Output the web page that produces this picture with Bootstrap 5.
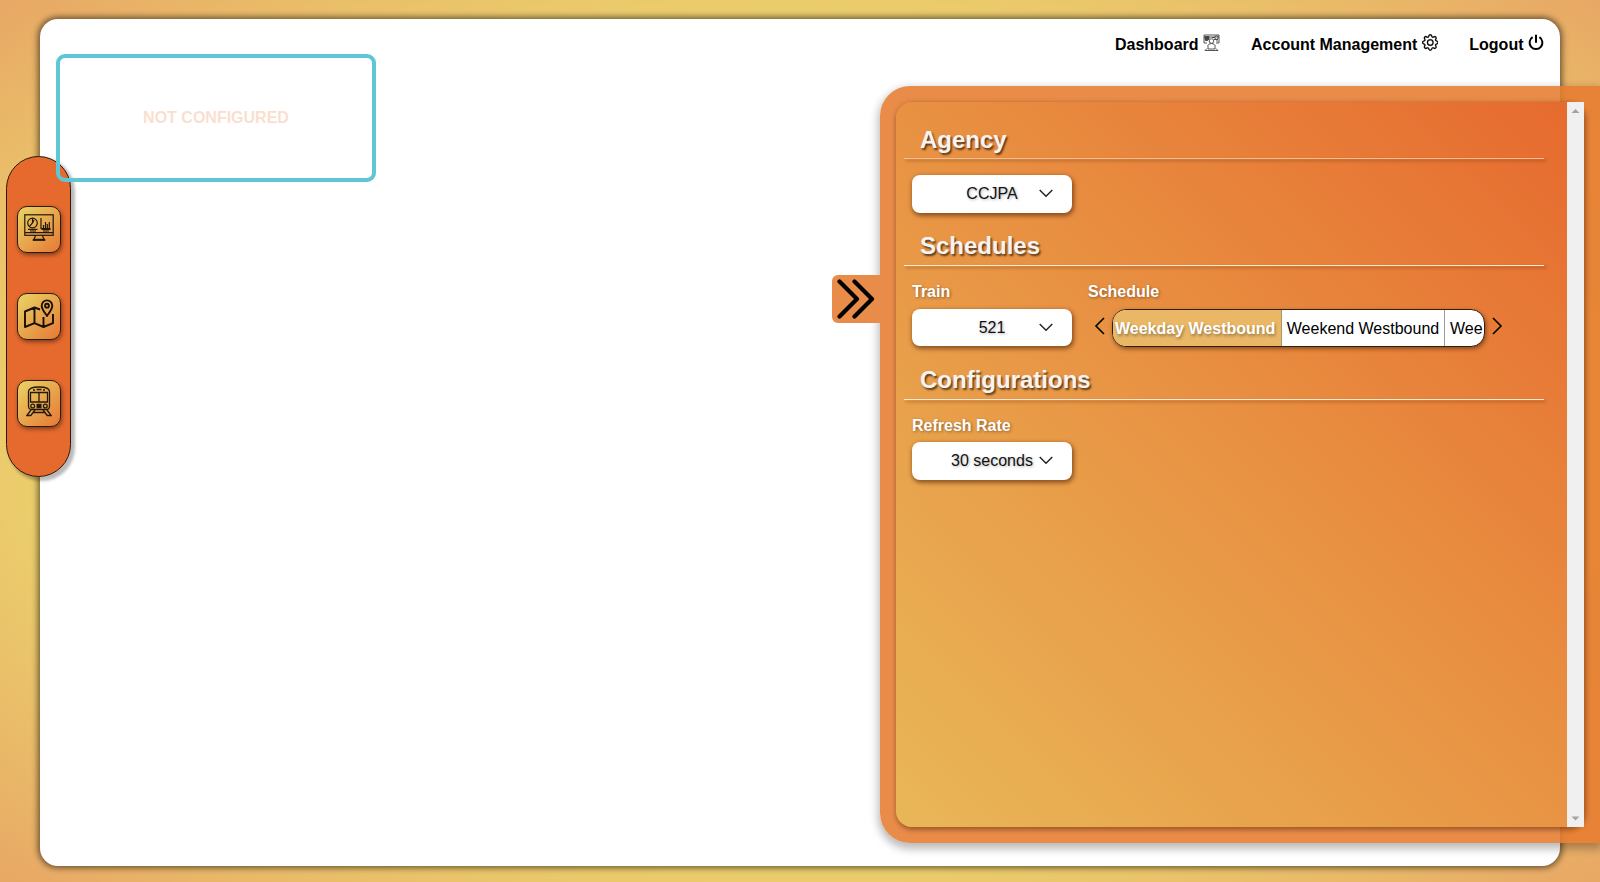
<!DOCTYPE html>
<html lang="en">
<head>
<meta charset="utf-8">
<meta name="viewport" content="width=device-width, initial-scale=1">
<title>Dashboard</title>
<link href="https://cdn.jsdelivr.net/npm/bootstrap@5.3.0/dist/css/bootstrap.min.css" rel="stylesheet">
<style>
body{font-family:"Liberation Sans",Arial,sans-serif;color:#000;background:radial-gradient(ellipse at center,#ebcf6e 0%,#ebcd6c 69%,#e8a765 100%);padding:18.5px 40px 16px;overflow:hidden}
.sheet{border-radius:18px;box-shadow:0 0 6px 2px rgba(0,0,0,.55)}
.topnav{padding:14.5px 16px 0;gap:31px}
.topnav a{color:#000;font-weight:700;line-height:24px;gap:4.5px}
.topnav svg{margin-top:1px}
.widget{left:56px;top:54px;width:320px;height:128px;border:4px solid #5fc6d4;border-radius:9px;color:#fadfd0;z-index:3}
.rail{left:6px;top:156px;width:65px;height:321px;border:1px solid #2b1a10;border-radius:33px;background:#e66a2e;box-shadow:3px 3px 3px 1px rgba(0,0,0,.27);gap:40px;z-index:2;padding:0 0 1px 1px}
.rail-btn{width:44px;height:47px;padding:0 0 3px;border:1px solid #2d1c0c;border-radius:10px;background:linear-gradient(135deg,#e9cb60 10%,#e66a2e 115%);box-shadow:1px 2px 4px rgba(0,0,0,.45)}
.drawer{left:880px;top:86px;width:720px;height:756.5px;padding:16px;border-radius:30px 0 0 30px;background:rgba(230,124,48,.88);box-shadow:0 4px 8px 2px rgba(0,0,0,.27);z-index:2}
.drawer-tab{left:832px;top:275px;width:48px;height:48px;border-radius:6px 0 0 6px;background:#e98c49;z-index:3}
.pane{border-radius:16px;background:linear-gradient(45deg,#e9b757,#e88f41 54%,#e6692e);box-shadow:1px 2px 5px 1px rgba(60,20,0,.42)}
.pane-body{padding:23px 23px 0 8px}
.sect h2{font-size:24px;font-weight:700;line-height:29px;color:#f7f3f0;margin:0;padding:0 0 5px 16px;text-shadow:1.5px 2px 2px rgba(0,0,0,.62)}
.sect:first-child h2{padding-bottom:4px}
.rule{height:1px;background:#ffe9d6;box-shadow:2px 2px 3px rgba(80,30,0,.5)}
.sect:first-child .rule{background:#f7bd92}
.sect{padding-bottom:18px}
.sect:first-child{padding-bottom:18.5px}
.fields{padding:14px 8px 0;column-gap:16px}
.cap{font-weight:700;color:#fff;line-height:24px;margin-bottom:4.5px;text-shadow:1px 1px 3px rgba(0,0,0,.4)}
.pick{width:160px;height:37.5px;border-radius:8px;background:#fff;color:#111;box-shadow:1px 2px 4px 1px rgba(70,25,0,.55);text-shadow:1px 1px 3px rgba(0,0,0,.3);border:0;padding:0}
.pick svg{left:127px;top:14px}
.cap + .pick{padding-top:1px}
.strip{width:373px;height:38px;border:1px solid #30200f;border-radius:14px;background:#fff;box-shadow:1px 2px 4px rgba(70,25,0,.55);margin:0 6px 0 5px}
.strip span{flex:none;line-height:37px;white-space:nowrap;border-right:1px solid #9a9a9a}
.strip .on{width:169px;background:#e9b766;color:#fff;font-weight:700;padding-left:2px;border-color:#a9946a;text-shadow:1px 2px 3px rgba(0,0,0,.35)}
.strip .off{width:163px;text-align:center}
.strip .last{border:0;padding-left:5px}
.scroller{width:17px;background:#f0f0f0}
.arrow{margin-top:-3px}
</style>
</head>
<body class="vh-100 position-relative">
<main class="sheet bg-white h-100">
  <nav class="topnav d-flex justify-content-end">
    <a href="#" class="d-flex text-decoration-none">Dashboard
      <svg width="17" height="18" viewBox="0 0 17 18" fill="none" stroke="#444" stroke-width=".9"><path d="M1 1h15v8h-3M4 9H1V1M1 3h15M2 5h4M2 6.500h3M9 3.500h3M11 5.500h4M13 7h2"/><path d="M2 2.500h4v3H2z" fill="#444"/><circle cx="13.500" cy="3.500" r="1.800"/><circle cx="8.500" cy="7" r="2.300" fill="#fff"/><path d="M4.500 12q1-2.500 4-2.500t4 2.500M5 12v3h7v-3M2 16.500h13M4 14.500l-2 2M13 14.500l2 2"/></svg></a>
    <a href="#" class="d-flex text-decoration-none">Account Management
      <svg width="16.500" height="17" viewBox="0 0 16 16" fill="#000" stroke="#000" stroke-width=".3"><path d="M8 4.754a3.246 3.246 0 1 0 0 6.492 3.246 3.246 0 0 0 0-6.492M5.754 8a2.246 2.246 0 1 1 4.492 0 2.246 2.246 0 0 1-4.492 0"/><path d="M9.796 1.343c-.527-1.790-3.065-1.790-3.592 0l-.094.319a.873.873 0 0 1-1.255.520l-.292-.160c-1.640-.892-3.433.902-2.540 2.541l.159.292a.873.873 0 0 1-.520 1.255l-.319.094c-1.790.527-1.790 3.065 0 3.592l.319.094a.873.873 0 0 1 .520 1.255l-.160.292c-.892 1.640.901 3.434 2.541 2.540l.292-.159a.873.873 0 0 1 1.255.520l.094.319c.527 1.790 3.065 1.790 3.592 0l.094-.319a.873.873 0 0 1 1.255-.520l.292.160c1.640.893 3.434-.902 2.540-2.541l-.159-.292a.873.873 0 0 1 .520-1.255l.319-.094c1.790-.527 1.790-3.065 0-3.592l-.319-.094a.873.873 0 0 1-.520-1.255l.160-.292c.893-1.640-.902-3.433-2.541-2.540l-.292.159a.873.873 0 0 1-1.255-.520zm-2.633.283c.246-.835 1.428-.835 1.674 0l.094.319a1.873 1.873 0 0 0 2.693 1.115l.291-.160c.764-.415 1.600.420 1.184 1.185l-.159.292a1.873 1.873 0 0 0 1.116 2.692l.318.094c.835.246.835 1.428 0 1.674l-.319.094a1.873 1.873 0 0 0-1.115 2.693l.160.291c.415.764-.420 1.600-1.185 1.184l-.291-.159a1.873 1.873 0 0 0-2.693 1.116l-.094.318c-.246.835-1.428.835-1.674 0l-.094-.319a1.873 1.873 0 0 0-2.692-1.115l-.292.160c-.764.415-1.600-.420-1.184-1.185l.159-.291A1.873 1.873 0 0 0 1.945 8.930l-.319-.094c-.835-.246-.835-1.428 0-1.674l.319-.094A1.873 1.873 0 0 0 3.060 4.377l-.160-.292c-.415-.764.420-1.600 1.185-1.184l.292.159a1.873 1.873 0 0 0 2.692-1.115z"/></svg></a>
    <a href="#" class="d-flex text-decoration-none">Logout
      <svg width="16" height="18" viewBox="0 0 16 18" fill="none" stroke="#000" stroke-width="2"><path d="M8 .7v8"/><path d="M4.600 3.200A6.400 6.400 0 1 0 11.400 3.200"/></svg></a>
  </nav>
</main>

<section class="widget position-absolute d-flex align-items-center justify-content-center fw-bold">NOT CONFIGURED</section>

<aside class="rail position-absolute d-flex flex-column align-items-center justify-content-center">
  <button class="rail-btn btn d-flex align-items-center justify-content-center">
    <svg width="30" height="28" viewBox="0 0 30 28" fill="none" stroke="#22190b" stroke-width="1.200"><rect x=".8" y=".8" width="28.400" height="20.500"/><path d="M1 18.700h28M11.500 21.500l-1.500 4M18.500 21.500l1.500 4M8.500 26h13" /><path d="M9 25.800h12" stroke-width="2"/><circle cx="8.500" cy="9" r="4.800"/><path d="M8.500 4v5l-3.300 3.600M8.500 9l1.500-3M4 15.400h9.500M6 17h6M17 4v10.500h9.500M17.500 15.500h9M19 17h6M19.500 14v-3M21.500 14V8M23.300 14v-4M25.300 14V8"/></svg>
  </button>
  <button class="rail-btn btn d-flex align-items-center justify-content-center">
    <svg width="30" height="32" viewBox="0 0 30 32" fill="none" stroke="#171006" stroke-width="1.900" stroke-linejoin="round"><path d="M16 10.500 10.500 8.500 1 12.500V28l9.500-3.800 9 3.800 9.500-3.800V15M10.500 8.500v15.700M19.500 18v10"/><path d="M23 17C20 12.500 17.700 10 17.700 6.700a5.300 5.300 0 0 1 10.600 0C28.300 10 26 12.500 23 17z"/><circle cx="23" cy="6.700" r="1.900"/></svg>
  </button>
  <button class="rail-btn btn d-flex align-items-center justify-content-center">
    <svg width="26" height="31" viewBox="0 0 26 31" fill="none" stroke="#22190b" stroke-width="1.300"><path d="M2.500 20V5.500Q2.500 1 13 1t10.500 4.500V20q0 3.500-3 3.500h-15q-3 0-3-3.500z"/><path d="M4.500 6.500h17v9.500h-17zM13 6.500V16M7 4h2M10.500 3.500h5M17 4h2M10.500 18.500h5M10.500 20h5M10.500 21.500h5"/><circle cx="6.700" cy="20" r="1.900"/><circle cx="19.300" cy="20" r="1.900"/><path d="M5 24 .8 29.500h4L9 24M21 24l4.200 5.500h-4L17 24M7 26.500h12"/></svg>
  </button>
</aside>

<button class="drawer-tab position-absolute border-0 p-0 d-flex align-items-center justify-content-center">
  <svg width="40" height="40" viewBox="0 0 40 40" fill="none" stroke="#000" stroke-width="4.200" stroke-linecap="round" stroke-linejoin="round"><path d="M3.500 2.500 21 20 3.500 37.500M18.500 2.500 36 20 18.500 37.500"/></svg>
</button>

<section class="drawer position-absolute">
  <div class="pane d-flex h-100">
    <div class="pane-body flex-grow-1">
      <div class="sect">
        <h2>Agency</h2><div class="rule"></div>
        <div class="fields d-flex pt-3">
          <button class="pick position-relative">CCJPA<svg class="position-absolute" width="14" height="9" viewBox="0 0 14 9" fill="none" stroke="#222" stroke-width="1.400"><path d="M.7 1 7 7.300 13.300 1"/></svg></button>
        </div>
      </div>
      <div class="sect">
        <h2>Schedules</h2><div class="rule"></div>
        <div class="fields d-flex">
          <div><div class="cap">Train</div>
          <button class="pick position-relative">521<svg class="position-absolute" width="14" height="9" viewBox="0 0 14 9" fill="none" stroke="#222" stroke-width="1.400"><path d="M.7 1 7 7.300 13.300 1"/></svg></button></div>
          <div><div class="cap">Schedule</div>
          <div class="d-flex align-items-center">
            <svg class="arrow ms-1" width="15" height="18" viewBox="0 0 15 18" fill="none" stroke="#000" stroke-width="1.600"><path d="M12 1 4 9l8 8"/></svg>
            <div class="strip d-flex overflow-hidden"><span class="on">Weekday Westbound</span><span class="off">Weekend Westbound</span><span class="last">Wee</span></div>
            <svg class="arrow" width="15" height="18" viewBox="0 0 15 18" fill="none" stroke="#000" stroke-width="1.600"><path d="m2 1 8 8-8 8"/></svg>
          </div></div>
        </div>
      </div>
      <div class="sect">
        <h2>Configurations</h2><div class="rule"></div>
        <div class="fields">
          <div class="cap">Refresh Rate</div>
          <button class="pick position-relative">30 seconds<svg class="position-absolute" width="14" height="9" viewBox="0 0 14 9" fill="none" stroke="#222" stroke-width="1.400"><path d="M.7 1 7 7.300 13.300 1"/></svg></button>
        </div>
      </div>
    </div>
    <div class="scroller d-flex flex-column justify-content-between align-items-center py-1">
      <svg width="9" height="9" viewBox="0 0 9 9" fill="#a3a3a3"><path d="M.5 7 4.500 3l4 4z"/></svg>
      <svg width="9" height="9" viewBox="0 0 9 9" fill="#a3a3a3"><path d="M.5 2.500l4 4 4-4z"/></svg>
    </div>
  </div>
</section>
<script src="https://cdn.jsdelivr.net/npm/bootstrap@5.3.0/dist/js/bootstrap.bundle.min.js"></script>
</body>
</html>
